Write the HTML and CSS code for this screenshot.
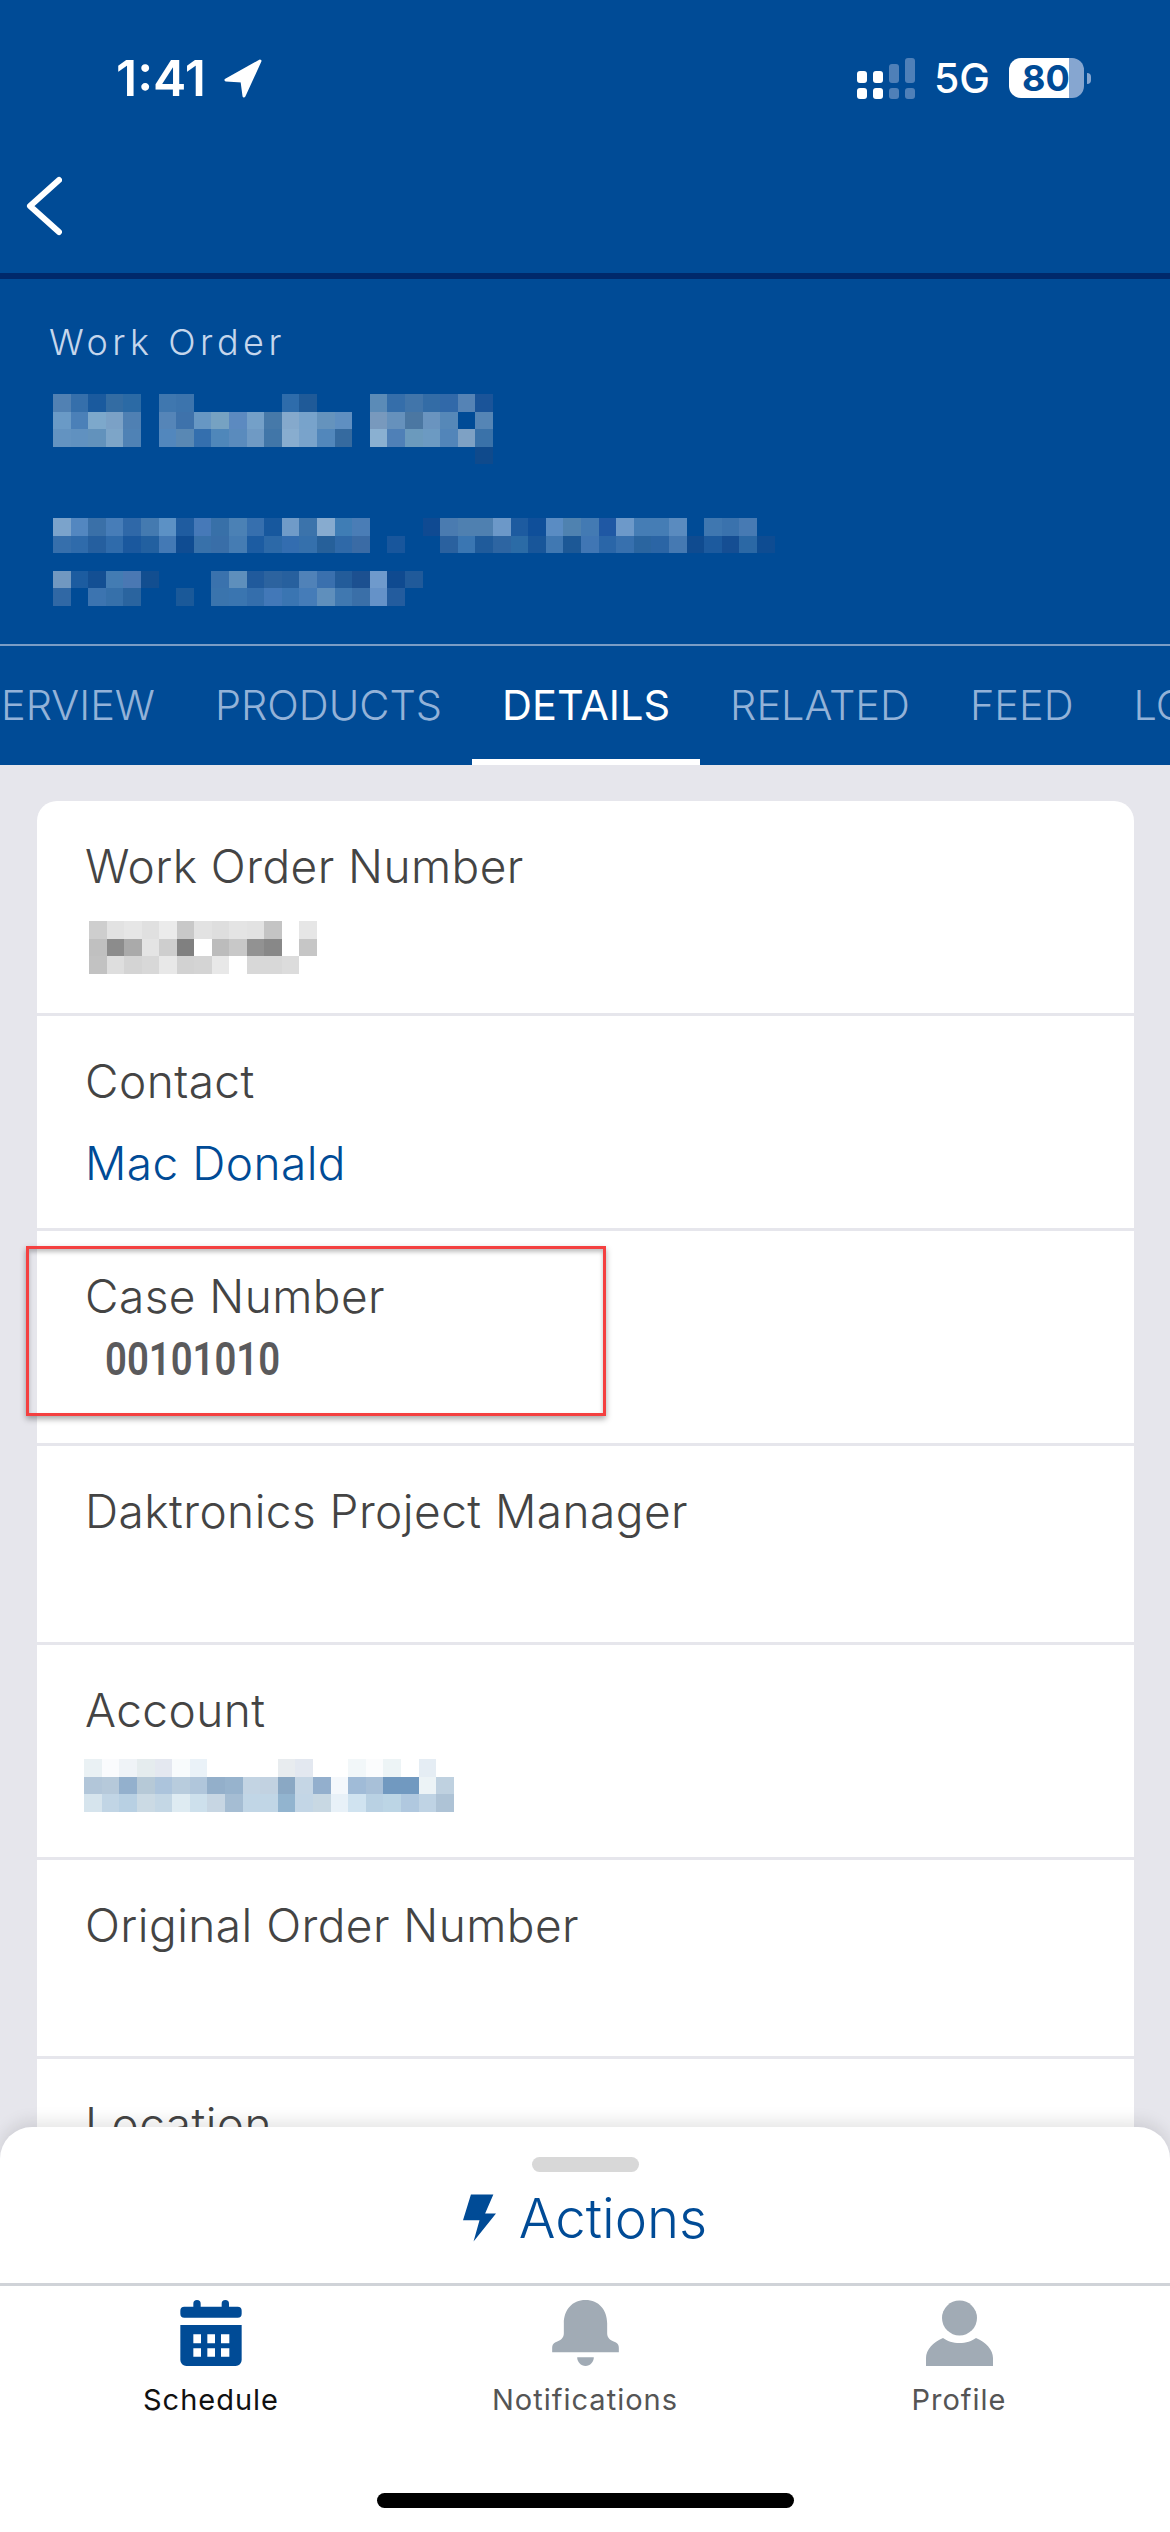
FILE: index.html
```html
<!DOCTYPE html>
<html lang="en">
<head>
    <meta charset="UTF-8">
    <meta name="viewport" content="width=device-width, initial-scale=1.0">
    <title>Work Order Details</title>
    <link rel="stylesheet" href="styles.css">
</head>
<body>
    <header class="app-header">
        <div class="status-bar">
            <div class="status-time">
                <span>1:41</span>
                <svg class="location-icon" viewBox="0 0 38 39"><path d="M36 2 L2 21 L18 22 L20 37 Z"/></svg>
            </div>
            <div class="status-right">
                <svg class="signal-icon" viewBox="0 0 58 41">
                    <rect x="0" y="13" width="10" height="12" rx="3" fill="#fff"/>
                    <rect x="16" y="13" width="10" height="12" rx="3" fill="#fff"/>
                    <rect x="32" y="6" width="10" height="19" rx="3" fill="#4f80b8"/>
                    <rect x="48" y="0" width="10" height="25" rx="3" fill="#4f80b8"/>
                    <rect x="0" y="30" width="10" height="11" rx="3" fill="#fff"/>
                    <rect x="16" y="30" width="10" height="11" rx="3" fill="#fff"/>
                    <rect x="32" y="30" width="10" height="11" rx="3" fill="#4f80b8"/>
                    <rect x="48" y="30" width="10" height="11" rx="3" fill="#4f80b8"/>
                </svg>
                <span class="network">5G</span>
                <div class="battery"><span>80</span></div>
                <div class="battery-nub"></div>
            </div>
        </div>

        <nav class="nav-bar">
            <svg class="back-icon" viewBox="0 0 36 60"><path d="M33 4 L4 30 L33 56"/></svg>
        </nav>

        <section class="hero">
            <div class="hero-label">Work Order</div>
            <svg class="mosaic mosaic-title" viewBox="0 0 25 4">
                <rect x="0" y="0" fill="#5181b3"/><rect x="1" y="0" fill="#356fab"/><rect x="2" y="0" fill="#1a5a9e"/><rect x="3" y="0" fill="#336ca3"/><rect x="4" y="0" fill="#2b6aa5"/>
                <rect x="6" y="0" fill="#3f77af"/><rect x="7" y="0" fill="#3c74ad"/><rect x="13" y="0" fill="#2e6cab"/><rect x="14" y="0" fill="#1f5a98"/>
                <rect x="18" y="0" fill="#5b8bb7"/><rect x="19" y="0" fill="#356eaa"/><rect x="20" y="0" fill="#4175aa"/><rect x="21" y="0" fill="#336ca6"/><rect x="22" y="0" fill="#3169a9"/><rect x="23" y="0" fill="#5583b5"/><rect x="24" y="0" fill="#1a5499"/>
                <rect x="0" y="1" fill="#6a9ac6"/><rect x="1" y="1" fill="#4b80b8"/><rect x="2" y="1" fill="#7da8cb"/><rect x="3" y="1" fill="#7ba1c6"/><rect x="4" y="1" fill="#4f80b3"/>
                <rect x="6" y="1" fill="#5585b8"/><rect x="7" y="1" fill="#3e72ab"/><rect x="8" y="1" fill="#6797c3"/><rect x="9" y="1" fill="#76a2c2"/><rect x="10" y="1" fill="#5c8ac0"/><rect x="11" y="1" fill="#74a0c8"/><rect x="12" y="1" fill="#4679a9"/><rect x="13" y="1" fill="#85a9cc"/><rect x="14" y="1" fill="#78a3cb"/><rect x="15" y="1" fill="#6593bd"/><rect x="16" y="1" fill="#5f8fc1"/>
                <rect x="18" y="1" fill="#7899bd"/><rect x="19" y="1" fill="#6691bc"/><rect x="20" y="1" fill="#4b77a2"/><rect x="21" y="1" fill="#6a94bf"/><rect x="22" y="1" fill="#5688b8"/><rect x="24" y="1" fill="#5585b5"/>
                <rect x="0" y="2" fill="#6393c1"/><rect x="1" y="2" fill="#6091c0"/><rect x="2" y="2" fill="#6292bc"/><rect x="3" y="2" fill="#7da5c8"/><rect x="4" y="2" fill="#4f82b5"/>
                <rect x="6" y="2" fill="#5287bd"/><rect x="7" y="2" fill="#5988b4"/><rect x="8" y="2" fill="#346fae"/><rect x="9" y="2" fill="#4f87ba"/><rect x="10" y="2" fill="#5a8bbd"/><rect x="11" y="2" fill="#6f9ac4"/><rect x="12" y="2" fill="#4176a8"/><rect x="13" y="2" fill="#88adcf"/><rect x="14" y="2" fill="#79a3cb"/><rect x="15" y="2" fill="#5287bb"/><rect x="16" y="2" fill="#356a9f"/>
                <rect x="18" y="2" fill="#8ab0d1"/><rect x="19" y="2" fill="#4f80b7"/><rect x="20" y="2" fill="#6b9abd"/><rect x="21" y="2" fill="#6c9ac2"/><rect x="22" y="2" fill="#5285b9"/><rect x="23" y="2" fill="#7ea1c4"/><rect x="24" y="2" fill="#3a72a9"/>
                <rect x="24" y="3" fill="#0f4a8c"/>
            </svg>
            <svg class="mosaic mosaic-address" viewBox="0 0 41 5">
                <rect x="0" y="0" fill="#7ba3cb"/><rect x="1" y="0" fill="#5387c0"/><rect x="2" y="0" fill="#3a70a8"/><rect x="3" y="0" fill="#477db8"/><rect x="4" y="0" fill="#2f68a8"/><rect x="5" y="0" fill="#447ab0"/><rect x="6" y="0" fill="#5c91c5"/><rect x="7" y="0" fill="#1f5ca0"/><rect x="8" y="0" fill="#4679b8"/><rect x="9" y="0" fill="#3870a8"/><rect x="10" y="0" fill="#4b81b5"/><rect x="11" y="0" fill="#366fae"/><rect x="12" y="0" fill="#17589e"/><rect x="13" y="0" fill="#709bc8"/><rect x="14" y="0" fill="#3b73ab"/><rect x="15" y="0" fill="#87abcf"/><rect x="16" y="0" fill="#3f7db5"/><rect x="17" y="0" fill="#4a7db6"/>
                <rect x="21" y="0" fill="#0f4a92"/><rect x="22" y="0" fill="#4a7bb0"/><rect x="23" y="0" fill="#4f80b0"/><rect x="24" y="0" fill="#4f80b0"/><rect x="25" y="0" fill="#6c98c8"/><rect x="26" y="0" fill="#1d5ba0"/><rect x="27" y="0" fill="#0f4f9a"/><rect x="28" y="0" fill="#5a8cc3"/><rect x="29" y="0" fill="#4f82b0"/><rect x="30" y="0" fill="#437ab3"/><rect x="31" y="0" fill="#1f58a4"/><rect x="32" y="0" fill="#6d99c9"/><rect x="33" y="0" fill="#457db5"/><rect x="34" y="0" fill="#457db5"/><rect x="35" y="0" fill="#5a8bbf"/><rect x="37" y="0" fill="#3f77b0"/><rect x="38" y="0" fill="#3a72ad"/><rect x="39" y="0" fill="#477ab3"/>
                <rect x="0" y="1" fill="#366fac"/><rect x="1" y="1" fill="#2f6bab"/><rect x="2" y="1" fill="#255f9f"/><rect x="3" y="1" fill="#2f6bab"/><rect x="4" y="1" fill="#1a589e"/><rect x="5" y="1" fill="#2260a0"/><rect x="6" y="1" fill="#4379b5"/><rect x="7" y="1" fill="#0f4c92"/><rect x="8" y="1" fill="#3871aa"/><rect x="9" y="1" fill="#396ea8"/><rect x="10" y="1" fill="#457cb3"/><rect x="11" y="1" fill="#1c5ca2"/><rect x="12" y="1" fill="#2c69a8"/><rect x="13" y="1" fill="#336db0"/><rect x="14" y="1" fill="#3570ac"/><rect x="15" y="1" fill="#26609a"/><rect x="16" y="1" fill="#2f69a8"/><rect x="17" y="1" fill="#3a6ba5"/><rect x="19" y="1" fill="#18569c"/>
                <rect x="22" y="1" fill="#2a619f"/><rect x="23" y="1" fill="#3a76b2"/><rect x="24" y="1" fill="#1f5b9b"/><rect x="25" y="1" fill="#2d65a2"/><rect x="26" y="1" fill="#2b6ba6"/><rect x="27" y="1" fill="#18569a"/><rect x="28" y="1" fill="#4078b2"/><rect x="29" y="1" fill="#1c5896"/><rect x="30" y="1" fill="#4076b4"/><rect x="31" y="1" fill="#2a66a8"/><rect x="32" y="1" fill="#3770ae"/><rect x="33" y="1" fill="#2a65a0"/><rect x="34" y="1" fill="#2b65a5"/><rect x="35" y="1" fill="#4579b2"/><rect x="36" y="1" fill="#0f4b90"/><rect x="37" y="1" fill="#1c5a9e"/><rect x="38" y="1" fill="#154e93"/><rect x="39" y="1" fill="#2b68a5"/><rect x="40" y="1" fill="#0e4c92"/>
                <rect x="0" y="3" fill="#7198c0"/><rect x="1" y="3" fill="#1c5ca0"/><rect x="2" y="3" fill="#134f93"/><rect x="3" y="3" fill="#437cb3"/><rect x="4" y="3" fill="#4a78b3"/><rect x="5" y="3" fill="#124e90"/><rect x="9" y="3" fill="#3a72ad"/><rect x="10" y="3" fill="#5e8fbc"/><rect x="11" y="3" fill="#205a9c"/><rect x="12" y="3" fill="#2c639f"/><rect x="13" y="3" fill="#27609e"/><rect x="14" y="3" fill="#5082b8"/><rect x="15" y="3" fill="#3a70ae"/><rect x="16" y="3" fill="#235c9a"/><rect x="17" y="3" fill="#1c5090"/><rect x="18" y="3" fill="#6f9acc"/><rect x="19" y="3" fill="#0f4a90"/><rect x="20" y="3" fill="#205a9a"/>
                <rect x="0" y="4" fill="#3068a5"/><rect x="2" y="4" fill="#3c74b0"/><rect x="3" y="4" fill="#3670aa"/><rect x="4" y="4" fill="#2a649f"/><rect x="7" y="4" fill="#1a5999"/><rect x="9" y="4" fill="#3a74ad"/><rect x="10" y="4" fill="#3a75b0"/><rect x="11" y="4" fill="#346eac"/><rect x="12" y="4" fill="#4278b8"/><rect x="13" y="4" fill="#3a75b2"/><rect x="14" y="4" fill="#457cb8"/><rect x="15" y="4" fill="#5f8fbc"/><rect x="16" y="4" fill="#4078b0"/><rect x="17" y="4" fill="#3a6fa8"/><rect x="18" y="4" fill="#6592c8"/><rect x="19" y="4" fill="#235c9e"/>
            </svg>
        </section>

        <div class="tab-strip">
            <div class="tab">ERVIEW</div>
            <div class="tab">PRODUCTS</div>
            <div class="tab tab-active">DETAILS</div>
            <div class="tab">RELATED</div>
            <div class="tab">FEED</div>
            <div class="tab">LO</div>
        </div>
    </header>

    <main class="content">
        <div class="card">
            <div class="field">
                <div class="field-label">Work Order Number</div>
                <svg class="mosaic mosaic-number" viewBox="0 0 13 3">
                    <rect x="0" y="0" fill="#cecece"/><rect x="1" y="0" fill="#e2e2e2"/><rect x="2" y="0" fill="#e6e6e6"/><rect x="3" y="0" fill="#e0e0e0"/><rect x="4" y="0" fill="#ebebeb"/><rect x="5" y="0" fill="#c8c8c8"/><rect x="6" y="0" fill="#e2e2e2"/><rect x="7" y="0" fill="#dedede"/><rect x="8" y="0" fill="#e4e4e4"/><rect x="9" y="0" fill="#e2e2e2"/><rect x="10" y="0" fill="#c4c4c4"/><rect x="12" y="0" fill="#e6e6e6"/>
                    <rect x="0" y="1" fill="#c0c0c0"/><rect x="1" y="1" fill="#8c8c8c"/><rect x="2" y="1" fill="#aaaaaa"/><rect x="3" y="1" fill="#e4e4e4"/><rect x="4" y="1" fill="#cecece"/><rect x="5" y="1" fill="#808080"/><rect x="7" y="1" fill="#bcbcbc"/><rect x="8" y="1" fill="#c8c8c8"/><rect x="9" y="1" fill="#929292"/><rect x="10" y="1" fill="#888888"/><rect x="12" y="1" fill="#c6c6c6"/>
                    <rect x="0" y="2" fill="#c2c2c2"/><rect x="1" y="2" fill="#dedede"/><rect x="2" y="2" fill="#d4d4d4"/><rect x="3" y="2" fill="#d8d8d8"/><rect x="4" y="2" fill="#e8e8e8"/><rect x="5" y="2" fill="#d2d2d2"/><rect x="6" y="2" fill="#d4d4d4"/><rect x="7" y="2" fill="#e8e8e8"/><rect x="9" y="2" fill="#d8d8d8"/><rect x="10" y="2" fill="#d8d8d8"/><rect x="11" y="2" fill="#dcdcdc"/>
                </svg>
            </div>
            <div class="field">
                <div class="field-label">Contact</div>
                <div class="field-value field-link">Mac Donald</div>
            </div>
            <div class="field">
                <div class="field-label">Case Number</div>
                <div class="case-value">00101010</div>
                <div class="callout"></div>
            </div>
            <div class="field field-empty">
                <div class="field-label">Daktronics Project Manager</div>
            </div>
            <div class="field">
                <div class="field-label">Account</div>
                <svg class="mosaic mosaic-account" viewBox="0 0 21 3">
                    <rect x="0" y="0" fill="#eaf1f4"/><rect x="1" y="0" fill="#fafbfd"/><rect x="2" y="0" fill="#eff3f7"/><rect x="3" y="0" fill="#e5ecee"/><rect x="4" y="0" fill="#e4e8f0"/><rect x="5" y="0" fill="#f8fbfc"/><rect x="6" y="0" fill="#eaf2f8"/><rect x="11" y="0" fill="#e8ecef"/><rect x="12" y="0" fill="#e3e8f0"/><rect x="15" y="0" fill="#f2f7f9"/><rect x="16" y="0" fill="#fbfcfd"/><rect x="17" y="0" fill="#edf4f6"/><rect x="19" y="0" fill="#e5edf4"/>
                    <rect x="0" y="1" fill="#b2c6d9"/><rect x="1" y="1" fill="#b6c9da"/><rect x="2" y="1" fill="#93b0cd"/><rect x="3" y="1" fill="#b6c9d7"/><rect x="4" y="1" fill="#acc4dc"/><rect x="5" y="1" fill="#b8ccdd"/><rect x="6" y="1" fill="#b0c6db"/><rect x="7" y="1" fill="#93afca"/><rect x="8" y="1" fill="#97b3cd"/><rect x="9" y="1" fill="#c3d4e3"/><rect x="10" y="1" fill="#c2d2e1"/><rect x="11" y="1" fill="#8aa8c4"/><rect x="12" y="1" fill="#c5d6e5"/><rect x="13" y="1" fill="#93afcd"/><rect x="14" y="1" fill="#f4f8fc"/><rect x="15" y="1" fill="#a0bbd7"/><rect x="16" y="1" fill="#a8c0d8"/><rect x="17" y="1" fill="#7199c0"/><rect x="18" y="1" fill="#7199c0"/><rect x="19" y="1" fill="#ecf3f6"/><rect x="20" y="1" fill="#bfd1e0"/>
                    <rect x="0" y="2" fill="#d6e4ed"/><rect x="1" y="2" fill="#c1d5e5"/><rect x="2" y="2" fill="#b8d0e3"/><rect x="3" y="2" fill="#cbdae4"/><rect x="4" y="2" fill="#c4d7e5"/><rect x="5" y="2" fill="#deebf2"/><rect x="6" y="2" fill="#cde0ec"/><rect x="7" y="2" fill="#c7d6e3"/><rect x="8" y="2" fill="#a5bdd3"/><rect x="9" y="2" fill="#c1d6e6"/><rect x="10" y="2" fill="#c1d6e6"/><rect x="11" y="2" fill="#92b4cf"/><rect x="12" y="2" fill="#c3d6e6"/><rect x="13" y="2" fill="#c8d8e3"/><rect x="14" y="2" fill="#e8f1f8"/><rect x="15" y="2" fill="#d0e3f0"/><rect x="16" y="2" fill="#b9d1e3"/><rect x="17" y="2" fill="#bcd5e5"/><rect x="18" y="2" fill="#b0c8df"/><rect x="19" y="2" fill="#bfd3e4"/><rect x="20" y="2" fill="#aec3d6"/>
                </svg>
            </div>
            <div class="field field-empty">
                <div class="field-label">Original Order Number</div>
            </div>
            <div class="field">
                <div class="field-label">Location</div>
            </div>
        </div>
    </main>

    <div class="bottom-sheet">
        <div class="sheet-handle"></div>
        <div class="actions-row">
            <svg class="bolt-icon" viewBox="0 0 100 143"><path d="M24 0 H92 L67 58 H100 L32 143 L50 78 H0 Z"/></svg>
            <span>Actions</span>
        </div>
        <div class="bottom-nav">
            <div class="nav-item nav-item-active">
                <svg class="nav-icon icon-calendar" viewBox="0 0 184 198">
                    <path d="M39 20 V11 A11 11 0 0 1 61 11 V20 H124 V11 A11 11 0 0 1 146 11 V20 H172 A12 12 0 0 1 184 32 V41 A12 12 0 0 1 172 53 H12 A12 12 0 0 1 0 41 V32 A12 12 0 0 1 12 20 Z"/>
                    <path fill-rule="evenodd" d="M0 75 H184 V180 A18 18 0 0 1 166 198 H18 A18 18 0 0 1 0 180 Z M39 103 V130 H62 V103 Z M81 103 V130 H104 V103 Z M122 103 V130 H147 V103 Z M39 145 V170 H62 V145 Z M81 145 V170 H104 V145 Z M122 145 V170 H147 V145 Z"/>
                </svg>
                <span>Schedule</span>
            </div>
            <div class="nav-item">
                <svg class="nav-icon icon-bell" viewBox="0 0 200 198">
                    <path d="M100 0 C60 0 35 30 35 70 V100 C35 115 25 122 10 127 C3 130 0 136 0 143 V157 H200 V143 C200 136 197 130 190 127 C175 122 165 115 165 100 V70 C165 30 140 0 100 0 Z"/>
                    <path d="M75 172 H125 C125 186 114 198 100 198 C86 198 75 186 75 172 Z"/>
                </svg>
                <span>Notifications</span>
            </div>
            <div class="nav-item">
                <svg class="nav-icon icon-profile" viewBox="0 0 67 66">
                    <circle cx="33.5" cy="18" r="17.5"/>
                    <path d="M17 38 C21 41 27 43 33.5 43 C40 43 46 41 50 38 C60 42 67 50 67 58 V66 H0 V58 C0 50 7 42 17 38 Z"/>
                </svg>
                <span>Profile</span>
            </div>
        </div>
        <div class="home-indicator"></div>
    </div>
</body>
</html>
```

FILE: styles.css
```css
body {
    margin: 0;
    width: 1170px;
    height: 2532px;
    position: relative;
    overflow: hidden;
    background-color: #e6e6ec;
    font-family: 'Inter', 'Liberation Sans', sans-serif;
    color: #444444;
}

.app-header {
    background-color: #004b96;
    color: #ffffff;
}

.status-bar {
    height: 156px;
    display: flex;
    justify-content: space-between;
    align-items: center;
    padding: 0 79px 0 116px;
}

.status-time {
    display: flex;
    align-items: center;
    gap: 18px;
    font-size: 50px;
    font-weight: 600;
}

.location-icon {
    width: 38px;
    height: 39px;
    fill: #ffffff;
    stroke: #ffffff;
    stroke-width: 3;
    stroke-linejoin: round;
}

.status-right {
    display: flex;
    align-items: center;
}

.signal-icon {
    width: 58px;
    height: 41px;
    margin-right: 19px;
}

.network {
    font-size: 41px;
    font-weight: 500;
    margin-right: 19px;
}

.battery {
    width: 75px;
    height: 40px;
    border-radius: 12px;
    background: linear-gradient(to right, #ffffff 80%, #86a6d0 80%);
    color: #004b96;
    font-size: 36px;
    font-weight: 700;
    line-height: 40px;
    padding-left: 13px;
    box-sizing: border-box;
}

.battery-nub {
    width: 4px;
    height: 11px;
    margin-left: 3px;
    border-radius: 0 6px 6px 0;
    background-color: #86a6d0;
}

.nav-bar {
    height: 123px;
    padding: 20px 0 0 26px;
    box-sizing: border-box;
    border-bottom: 6px solid #00296b;
}

.back-icon {
    display: block;
    width: 36px;
    height: 60px;
    fill: none;
    stroke: #ffffff;
    stroke-width: 6;
    stroke-linecap: round;
    stroke-linejoin: round;
}

.hero {
    padding: 41px 0 38px 49px;
    border-bottom: 2px solid #7a9dc6;
}

.hero-label {
    font-size: 36px;
    font-weight: 300;
    line-height: 44px;
    letter-spacing: 4.5px;
    color: #c5d6ec;
}

.mosaic {
    display: block;
    shape-rendering: crispEdges;
}

.mosaic rect {
    width: 1px;
    height: 1px;
}

.mosaic-title {
    width: 440px;
    height: 70.4px;
    margin: 30px 0 0 4px;
}

.mosaic-address {
    width: 721.6px;
    height: 88px;
    margin: 54px 0 0 4px;
}

.tab-strip {
    height: 119px;
    display: flex;
    margin-left: -29px;
    overflow: hidden;
}

.tab {
    flex: none;
    box-sizing: border-box;
    height: 119px;
    line-height: 112px;
    padding: 3px 30px 0;
    font-size: 41.5px;
    font-weight: 300;
    color: #93b2d8;
}

.tab-active {
    color: #ffffff;
    font-weight: 400;
    border-bottom: 6px solid #ffffff;
}

.content {
    padding: 36px 36px 0 37px;
}

.card {
    background-color: #ffffff;
    border-radius: 20px 20px 0 0;
}

.field {
    position: relative;
    height: 138px;
    padding: 37px 0 37px 48px;
    border-bottom: 3px solid #e6e6ec;
}

.field-empty {
    height: 122px;
}

.field-label {
    font-size: 46px;
    font-weight: 350;
    line-height: 56px;
    letter-spacing: 0.45px;
}

.field-value {
    margin-top: 26px;
    font-size: 46px;
    font-weight: 350;
    line-height: 56px;
    letter-spacing: 0.45px;
}

.field-link {
    color: #004b96;
}

.case-value {
    margin: 7px 0 0 20px;
    font-family: 'Roboto', 'Liberation Sans', sans-serif;
    font-size: 47px;
    font-weight: 600;
    line-height: 56px;
    color: #5a5a5c;
    transform: scaleX(0.815);
    transform-origin: left center;
}

.callout {
    position: absolute;
    left: -11px;
    top: 15px;
    width: 574px;
    height: 164px;
    border: 3px solid #f44040;
    box-shadow: 0 3px 6px rgba(0, 0, 0, 0.35), inset 0 3px 4px rgba(0, 0, 0, 0.25);
}

.mosaic-number {
    width: 227.5px;
    height: 52.5px;
    margin: 27px 0 0 4px;
}

.mosaic-account {
    width: 370px;
    height: 52.8px;
    margin-top: 21px;
    margin-left: -1px;
}

.bottom-sheet {
    position: absolute;
    left: 0;
    right: 0;
    bottom: 0;
    height: 405px;
    display: flex;
    flex-direction: column;
    background-color: #ffffff;
    border-radius: 32px 32px 0 0;
    box-shadow: 0 -6px 16px rgba(0, 0, 0, 0.1);
}

.sheet-handle {
    width: 107px;
    height: 15px;
    margin: 30px auto 0;
    border-radius: 8px;
    background-color: #d8d8d8;
}

.actions-row {
    height: 60px;
    margin: 16px 0 35px;
    display: flex;
    justify-content: center;
    align-items: center;
    gap: 23px;
    font-size: 54.5px;
    font-weight: 350;
    color: #004b96;
}

.bolt-icon {
    width: 33px;
    height: 48px;
    fill: #004b96;
}

.bottom-nav {
    display: grid;
    grid-template-columns: repeat(3, 1fr);
    padding: 14px 24px 0;
    border-top: 3px solid #d0d3d8;
}

.nav-item {
    display: flex;
    flex-direction: column;
    align-items: center;
    font-size: 29px;
    line-height: 36px;
    letter-spacing: 1px;
    color: #555555;
}

.nav-item-active {
    color: #111111;
}

.nav-icon {
    height: 66px;
    margin-bottom: 16px;
    fill: #a1abb5;
}

.nav-item-active .nav-icon {
    fill: #004b96;
}

.icon-calendar {
    width: 62px;
}

.icon-bell {
    width: 67px;
}

.icon-profile {
    width: 67px;
}

.home-indicator {
    width: 417px;
    height: 15px;
    margin: auto auto 24px;
    border-radius: 8px;
    background-color: #000000;
}
```
